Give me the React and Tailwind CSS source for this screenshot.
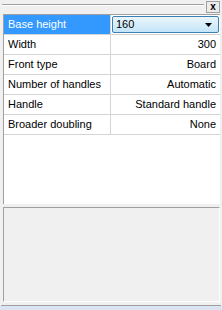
export default function App() {
  const rows = [
    ["Width", "300"],
    ["Front type", "Board"],
    ["Number of handles", "Automatic"],
    ["Handle", "Standard handle"],
    ["Broader doubling", "None"],
  ];
  return (
    <div
      className="w-[222px] h-[310px] bg-[#f0f0f0] flex flex-col overflow-hidden text-[11px] text-black"
      style={{ fontFamily: '"Liberation Sans", Arial, sans-serif' }}
    >
      <div className="h-[14px] flex items-start shrink-0">
        <div className="flex-1 ml-[2px] mr-[2px] mt-[4px] flex flex-col">
          <div className="h-px bg-[#a0a0a0]" />
          <div className="h-px bg-white" />
        </div>
        <div className="w-[14px] h-[12px] mt-[1px] mr-[2px] border border-[#a0a0a0] bg-[#ececec] flex items-center justify-center text-[10px] font-bold leading-none">
          x
        </div>
      </div>
      <div className="ml-[3px] mr-[2px] h-[190px] bg-white border-t border-l border-[#a0a0a0] flex flex-col shrink-0">
        <div className="flex h-[20px] border-b border-[#d4d4d4]">
          <div className="w-[107px] bg-[#3399ff] text-white pl-[4px] flex items-center border-r border-[#d4d4d4]">
            Base height
          </div>
          <div className="flex-1 flex p-px">
            <div className="flex-1 rounded-[2px] border border-[#3c7fb1] bg-gradient-to-b from-[#eaf6fd] to-[#c4e5f8] flex items-center justify-between pl-[3px] pr-[6px]">
              <span>160</span>
              <svg width="7" height="4" viewBox="0 0 7 4">
                <path d="M0 0H7L3.5 4Z" fill="#000" />
              </svg>
            </div>
          </div>
        </div>
        {rows.map(([k, v]) => (
          <div key={k} className="flex h-[20px] border-b border-[#d4d4d4]">
            <div className="w-[107px] pl-[4px] flex items-center border-r border-[#d4d4d4]">
              {k}
            </div>
            <div className="flex-1 flex items-center justify-end pr-[4px]">{v}</div>
          </div>
        ))}
      </div>
      <div className="h-[3px] shrink-0" />
      <div className="ml-[3px] mr-[2px] h-[95px] border-t border-l border-[#a0a0a0] border-r border-b border-r-white border-b-white bg-[#f0f0f0] shrink-0" />
      <div className="h-[3px] shrink-0" />
      <div className="h-px bg-[#a0a0a0] mx-px shrink-0" />
      <div className="flex-1 bg-[#dce4f4]" />
    </div>
  );
}
